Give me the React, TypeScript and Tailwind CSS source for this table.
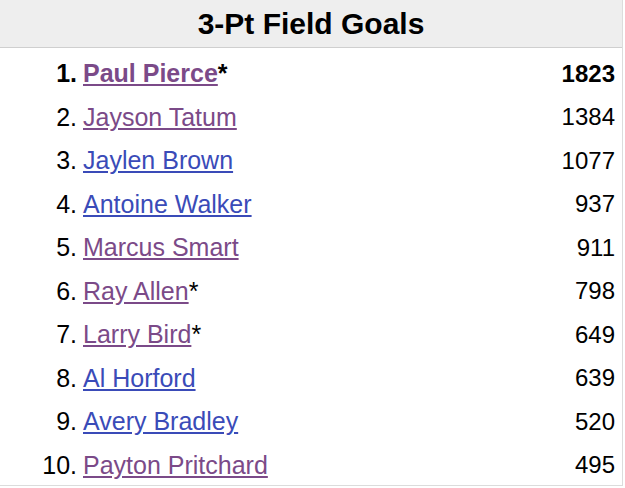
const leaders = [
  { rank: 1, name: "Paul Pierce", hof: true, visited: true, value: 1823 },
  { rank: 2, name: "Jayson Tatum", hof: false, visited: true, value: 1384 },
  { rank: 3, name: "Jaylen Brown", hof: false, visited: false, value: 1077 },
  { rank: 4, name: "Antoine Walker", hof: false, visited: false, value: 937 },
  { rank: 5, name: "Marcus Smart", hof: false, visited: true, value: 911 },
  { rank: 6, name: "Ray Allen", hof: true, visited: true, value: 798 },
  { rank: 7, name: "Larry Bird", hof: true, visited: true, value: 649 },
  { rank: 8, name: "Al Horford", hof: false, visited: false, value: 639 },
  { rank: 9, name: "Avery Bradley", hof: false, visited: false, value: 520 },
  { rank: 10, name: "Payton Pritchard", hof: false, visited: true, value: 495 },
];

export default function App() {
  return (
    <div
      className="w-[623px] bg-white text-black"
      style={{ fontFamily: '"Liberation Sans", Arial, sans-serif' }}
    >
      <div className="border-r border-[#dcdcdc]">
        <div className="h-[48px] bg-[#eeeeee] border-b border-[#cfcfcf] flex items-center justify-center">
          <h2 className="text-[30px] font-bold leading-none">3-Pt Field Goals</h2>
        </div>
        <div className="pt-[2px] border-b border-[#dcdcdc]">
          {leaders.map((p) => (
            <div
              key={p.rank}
              className={`h-[43.5px] pt-[4px] flex items-center leading-none ${
                p.rank === 1 ? "font-bold" : ""
              }`}
            >
              <span className="w-[77px] text-right text-[25px]">{p.rank}.</span>
              <span className="ml-[6px] text-[25px]">
                <a
                  href="#"
                  className={`underline underline-offset-[2px] ${
                    p.visited ? "text-[#7b4a88]" : "text-[#3a4bb8]"
                  }`}
                >
                  {p.name}
                </a>
                {p.hof && "*"}
              </span>
              <span className="ml-auto pr-[7px] text-[24px]">{p.value}</span>
            </div>
          ))}
        </div>
      </div>
    </div>
  );
}
